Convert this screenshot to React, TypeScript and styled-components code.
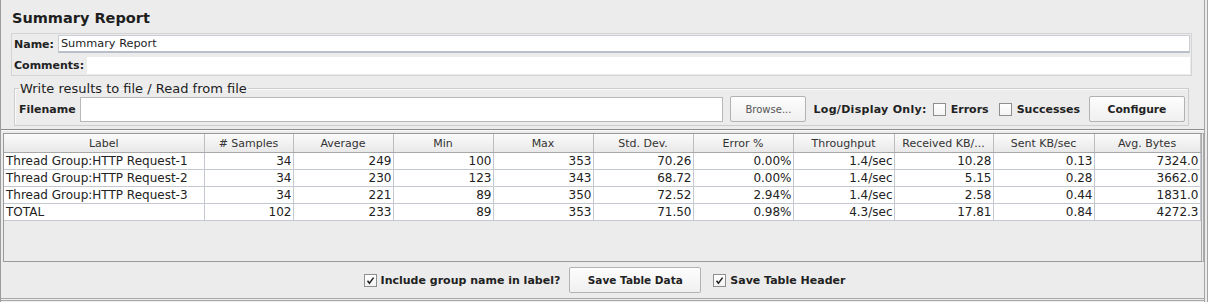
import styled, { createGlobalStyle } from 'styled-components'

const GlobalStyle = createGlobalStyle`
  html, body {
    margin: 0;
    padding: 0;
    background: #ececec;
  }
  body {
    font-family: 'DejaVu Sans', 'Liberation Sans', sans-serif;
    color: #222;
  }
`

const Frame = styled.div`
  width: 1208px;
  height: 302px;
  box-sizing: border-box;
  background: #ececec;
  display: flex;
  flex-direction: column;
  border-left: 1px solid #9c9c9c;
  border-right: 4px double #a4a4a4;
  overflow: hidden;
`

const Title = styled.h1`
  margin: 0;
  padding: 8px 0 0 11px;
  height: 28px;
  box-sizing: border-box;
  font-size: 14.5px;
  line-height: 20px;
  font-weight: bold;
  color: #1e1e1e;
`

const NamePanel = styled.div`
  margin: 5px 12px 0 10px;
  border: 1px solid #d4d4d4;
  padding: 1px 1px 1px 2px;
  display: flex;
  flex-direction: column;
  gap: 3px;
`

const FieldRow = styled.div`
  display: flex;
  align-items: center;
  height: 18px;
`

const BoldLabel = styled.span<{ $gap?: number; $spread?: number }>`
  font-size: 11px;
  font-weight: bold;
  color: #222;
  white-space: nowrap;
  letter-spacing: ${(p) => p.$spread ?? 0}px;
  margin-right: ${(p) => p.$gap ?? 4}px;
`

const NameInput = styled.div<{ $framed?: boolean }>`
  flex: 1;
  height: ${(p) => (p.$framed ? 18 : 17)}px;
  box-sizing: border-box;
  background: #fff;
  border: ${(p) => (p.$framed ? '1px solid #c9ccd2' : 'none')};
  border-bottom: ${(p) => (p.$framed ? '2px solid #b9bfc8' : 'none')};
  font-size: 11.3px;
  line-height: 15px;
  padding-left: 2px;
  color: #222;
`

const GroupBox = styled.fieldset`
  margin: 5px 15px 0 13px;
  padding: 0 3px 3px 4px;
  border: 1px solid #cdcdcd;
  box-shadow: inset 1px 1px 0 #fafafa;
  min-width: 0;
  display: flex;
  align-items: center;
`

const Legend = styled.legend`
  font-size: 13px;
  padding: 0 1px;
  margin-left: 0;
  color: #222;
`

const FileRow = styled.div`
  display: flex;
  align-items: center;
  width: 100%;
  height: 26px;
`

const FileInput = styled.div`
  flex: 1;
  height: 25px;
  box-sizing: border-box;
  background: #fff;
  border: 1px solid #b8b8b8;
  margin-right: 7px;
`

const Button = styled.button<{ $width: number; $bold?: boolean; $size?: number; $gap?: number }>`
  width: ${(p) => p.$width}px;
  flex: none;
  height: 26px;
  box-sizing: border-box;
  background: linear-gradient(#fdfdfd, #f0f0f0);
  border: 1px solid #b2b2b2;
  border-radius: 2px;
  font-family: 'DejaVu Sans', 'Liberation Sans', sans-serif;
  font-size: ${(p) => p.$size ?? 10.5}px;
  font-weight: ${(p) => (p.$bold ? 'bold' : 'normal')};
  color: ${(p) => (p.$bold ? '#222' : '#555')};
  padding: 0;
  margin-right: ${(p) => p.$gap ?? 7}px;
`

const CheckGroup = styled.label<{ $gap?: number; $inner?: number }>`
  display: flex;
  align-items: center;
  flex: none;
  gap: ${(p) => p.$inner ?? 5}px;
  margin-right: ${(p) => p.$gap ?? 10}px;
`

const Box = styled.span`
  width: 13px;
  height: 13px;
  box-sizing: border-box;
  border: 1px solid #8e8e8e;
  background: linear-gradient(#ffffff, #f3f3f3);
  display: inline-flex;
  align-items: center;
  justify-content: center;
`

const Divider = styled.div`
  margin-top: 3px;
  border-top: 1px solid #8e8e8e;
  border-bottom: 1px solid #fafafa;
`

const TableWrap = styled.div`
  margin: 2px 0 0 2px;
  height: 129px;
  box-sizing: border-box;
  border: 1px solid #9a9a9a;
  border-right: 3px double #aaaaaa;
  background: #ececec;
  overflow: hidden;
`

const Grid = styled.table`
  border-collapse: collapse;
  table-layout: fixed;
  width: 1196px;
`

const Head = styled.th`
  height: 18px;
  padding: 0 2px;
  background: linear-gradient(#fbfbfb, #e8e8e8);
  border-right: 1px solid #bdbdbd;
  border-bottom: 1px solid #a8a8a8;
  font-size: 11px;
  font-weight: normal;
  color: #333;
  text-align: center;
  white-space: nowrap;
  overflow: hidden;
`

const Cell = styled.td<{ $left?: boolean }>`
  height: 16px;
  padding: 0 1px 0 2px;
  background: #fff;
  border-right: 1px solid #c3c8d1;
  border-bottom: 1px solid #c3c8d1;
  font-size: 12px;
  line-height: 16px;
  color: #222;
  text-align: ${(p) => (p.$left ? 'left' : 'right')};
  white-space: nowrap;
  overflow: hidden;
`

const BottomBar = styled.div`
  flex: 1;
  display: flex;
  align-items: center;
  justify-content: center;
  padding-left: 4px;
  border-bottom: 3px double #a8a8a8;
  margin-bottom: 1px;
`

const columns: [string, number][] = [
  ['Label', 200],
  ['# Samples', 89],
  ['Average', 100],
  ['Min', 100],
  ['Max', 100],
  ['Std. Dev.', 100],
  ['Error %', 100],
  ['Throughput', 101],
  ['Received KB/...', 99],
  ['Sent KB/sec', 101],
  ['Avg. Bytes', 106]
]

const rows = [
  ['Thread Group:HTTP Request-1', '34', '249', '100', '353', '70.26', '0.00%', '1.4/sec', '10.28', '0.13', '7324.0'],
  ['Thread Group:HTTP Request-2', '34', '230', '123', '343', '68.72', '0.00%', '1.4/sec', '5.15', '0.28', '3662.0'],
  ['Thread Group:HTTP Request-3', '34', '221', '89', '350', '72.52', '2.94%', '1.4/sec', '2.58', '0.44', '1831.0'],
  ['TOTAL', '102', '233', '89', '353', '71.50', '0.98%', '4.3/sec', '17.81', '0.84', '4272.3']
]

const Checkbox = ({ checked }: { checked?: boolean }) => (
  <Box>
    {checked && (
      <svg width="9" height="9" viewBox="0 0 9 9">
        <path d="M1.5 4.8 L3.4 7.3 L7.6 1.6" fill="none" stroke="#222" strokeWidth="1.5" />
      </svg>
    )}
  </Box>
)

const App = () => (
  <Frame>
    <GlobalStyle />
    <Title>Summary Report</Title>
    <NamePanel>
      <FieldRow>
        <BoldLabel>Name:</BoldLabel>
        <NameInput $framed>Summary Report</NameInput>
      </FieldRow>
      <FieldRow>
        <BoldLabel $gap={3}>Comments:</BoldLabel>
        <NameInput />
      </FieldRow>
    </NamePanel>
    <GroupBox>
      <Legend>Write results to file / Read from file</Legend>
      <FileRow>
        <BoldLabel $gap={4}>Filename</BoldLabel>
        <FileInput />
        <Button $width={76} $size={10}>Browse...</Button>
        <BoldLabel $gap={6} $spread={0.3}>Log/Display Only:</BoldLabel>
        <CheckGroup $gap={10}>
          <Checkbox />
          <BoldLabel $gap={0}>Errors</BoldLabel>
        </CheckGroup>
        <CheckGroup $gap={9}>
          <Checkbox />
          <BoldLabel $gap={0}>Successes</BoldLabel>
        </CheckGroup>
        <Button $width={96} $bold $size={10.75} $gap={0}>Configure</Button>
      </FileRow>
    </GroupBox>
    <Divider />
    <TableWrap>
      <Grid>
        <colgroup>
          {columns.map(([name, w]) => (
            <col key={name} style={{ width: w }} />
          ))}
        </colgroup>
        <thead>
          <tr>
            {columns.map(([name]) => (
              <Head key={name}>{name}</Head>
            ))}
          </tr>
        </thead>
        <tbody>
          {rows.map((r) => (
            <tr key={r[0]}>
              {r.map((v, i) => (
                <Cell key={i} $left={i === 0}>{v}</Cell>
              ))}
            </tr>
          ))}
        </tbody>
      </Grid>
    </TableWrap>
    <BottomBar>
      <CheckGroup $gap={9} $inner={4}>
        <Checkbox checked />
        <BoldLabel $gap={0}>Include group name in label?</BoldLabel>
      </CheckGroup>
      <Button $width={132} $bold $gap={12}>Save Table Data</Button>
      <CheckGroup $gap={0} $inner={4}>
        <Checkbox checked />
        <BoldLabel $gap={0}>Save Table Header</BoldLabel>
      </CheckGroup>
    </BottomBar>
  </Frame>
)

export default App
